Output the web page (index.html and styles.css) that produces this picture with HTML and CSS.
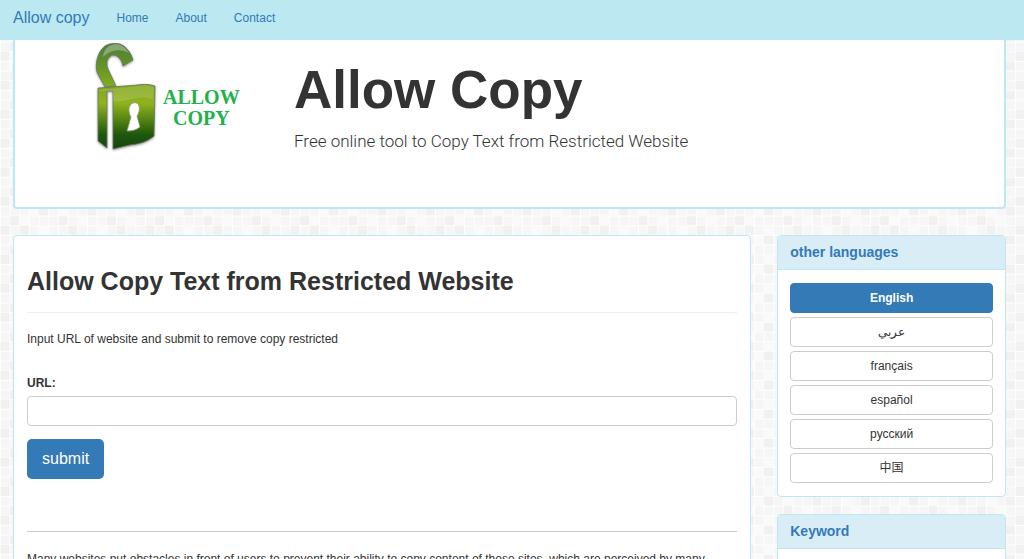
FILE: index.html
```html
<!DOCTYPE html>
<html lang="en">
<head>
  <meta charset="UTF-8">
  <meta name="viewport" content="width=device-width, initial-scale=1">
  <title>Allow Copy</title>
  <link rel="stylesheet" href="styles.css">
</head>
<body>
  <nav class="navbar">
    <a class="brand" href="#">Allow copy</a>
    <a href="#">Home</a>
    <a href="#">About</a>
    <a href="#">Contact</a>
  </nav>

  <div class="container">
    <header class="banner">
      <div class="logo">
        <svg class="lock" viewBox="0 0 64 112" aria-hidden="true">
          <defs>
            <linearGradient id="body" gradientUnits="userSpaceOnUse" x1="0" y1="42" x2="0" y2="106">
              <stop offset="0" stop-color="#7fa51c" />
              <stop offset="0.28" stop-color="#91b31d" />
              <stop offset="0.5" stop-color="#5d8c16" />
              <stop offset="0.78" stop-color="#1f5608" />
              <stop offset="1" stop-color="#174706" />
            </linearGradient>
            <linearGradient id="shackle" x1="0" y1="0" x2="0" y2="1">
              <stop offset="0" stop-color="#527e38" />
              <stop offset="0.45" stop-color="#5d912a" />
              <stop offset="1" stop-color="#83ad1d" />
            </linearGradient>
            <filter id="shadow" x="-20%" y="-20%" width="140%" height="140%">
              <feDropShadow dx="0" dy="1" stdDeviation="1" flood-color="#333" flood-opacity="0.5" />
            </filter>
          </defs>
          <g filter="url(#shadow)" stroke="#68746a" stroke-width="0.8" stroke-linejoin="round">
            <path fill="url(#body)" d="M3 45 L42 42 C48 41 54 41 60 43 L59 93 C52 99 44 101 35 102 L18 106 L18 48 L12 48 L12 105 L3 98 Z" />
            <path fill="url(#shackle)" d="M10 44 C7 38 4 34 2 29 C0 22 2 9 10 3 C15 0 26 -2 32 6 C35 9 37 13 38 17 L28 23 C27 19 26 16 23 14 C20 11 15 11 12 18 C12 21 12 24 13 26 L21 43 Z" />
            <path fill="#fff" stroke="#8c9d80" d="M38 60 C45 58 46 67 42 73 L45 84 C41 87 37 88 32 88 L36 74 C33 69 33 62 38 60 Z" />
          </g>
          <path fill="#fff" opacity="0.3" d="M8 14 C9 4 16 1 22 1 C28 2 31 5 34 10 C25 5 15 7 8 14 Z" />
          <path fill="#fff" opacity="0.14" d="M4 47 L42 43 C49 42 54 42 59 44 L58 57 C47 50 31 60 18 58 L18 48 L4 48 Z" />
        </svg>
        <span class="logo-text">ALLOW<br>COPY</span>
      </div>
      <div class="banner-text">
        <h1>Allow Copy</h1>
        <p>Free online tool to Copy Text from Restricted Website</p>
      </div>
    </header>

    <div class="row">
      <main class="col-main">
        <div class="panel content">
          <h2>Allow Copy Text from Restricted Website</h2>
          <p>Input URL of website and submit to remove copy restricted</p>
          <form action="#">
            <label for="url">URL:</label>
            <input type="text" id="url" name="url">
            <button type="submit" class="btn-submit">submit</button>
          </form>
          <p class="article">Many websites put obstacles in front of users to prevent their ability to copy content of these sites, which are perceived by many</p>
        </div>
      </main>

      <aside class="col-side">
        <section class="panel">
          <h3>other languages</h3>
          <div class="languages">
            <a class="active" href="#">English</a>
            <a href="#" lang="ar">عربي</a>
            <a href="#" lang="fr">français</a>
            <a href="#" lang="es">español</a>
            <a href="#" lang="ru">русский</a>
            <a href="#" lang="zh">中国</a>
          </div>
        </section>
        <section class="panel">
          <h3>Keyword</h3>
          <div class="keywords"></div>
        </section>
      </aside>
    </div>
  </div>
</body>
</html>
```
FILE: styles.css
```css
* {
  box-sizing: border-box;
}

body {
  margin: 0;
  padding-top: 40px;
  background-color: #f9f9f9;
  /* small squares, 15 columns by 3 rows */
  background-image: url("data:image/svg+xml,%3Csvg xmlns='http://www.w3.org/2000/svg' width='150' height='30' viewBox='0 0 150 30'%3E%3Cdefs%3E%3Cpattern id='p' width='10' height='10' patternUnits='userSpaceOnUse'%3E%3Crect x='1' y='1' width='9' height='9' fill='%23f6f6f6'/%3E%3C/pattern%3E%3C/defs%3E%3Crect width='150' height='30' fill='%23fefefe'/%3E%3Crect width='150' height='30' fill='url(%23p)'/%3E%3Cpath fill='%23fafafa' d='M31 1h9v9h-9zM61 1h9v9h-9zM121 1h9v9h-9zM21 11h9v9h-9zM81 11h9v9h-9zM131 11h9v9h-9zM41 21h9v9h-9zM101 21h9v9h-9z'/%3E%3Cpath fill='%23f1f1f0' stroke='%23ededec' stroke-width='.6' d='M41 1h8v8h-8zM91 1h8v8h-8zM141 1h8v8h-8zM11 11h8v8h-8zM61 11h8v8h-8zM111 11h8v8h-8zM1 21h8v8h-8zM21 21h8v8h-8zM71 21h8v8h-8zM121 21h8v8h-8z'/%3E%3C/svg%3E");
  background-size: 145px 29px;
  background-position: 0 3px;
  font-family: "Liberation Sans", "Noto Sans CJK SC", sans-serif;
  font-size: 12px;
  line-height: 18px;
  color: #333;
}

a {
  color: #337ab7;
  text-decoration: none;
}

.navbar {
  position: fixed;
  top: 0;
  left: 0;
  right: 0;
  z-index: 10;
  display: flex;
  align-items: center;
  gap: 27px;
  height: 40px;
  padding: 0 13px 4px;
  background: #bce8f1;
}

.brand {
  font-size: 16px;
}

.container {
  margin-right: 5px;
}

.banner {
  display: flex;
  margin: 0 13px 26px;
  padding-bottom: 52px;
  background: #fff;
  border: 2px solid #bce8f1;
  border-top: 0;
  border-radius: 0 0 4px 4px;
}

.logo {
  display: flex;
  flex: 0 0 279px;
  gap: 4px;
  padding: 3px 0 0 80px;
}

.lock {
  width: 64px;
  height: 112px;
  overflow: visible;
}

.logo-text {
  padding-top: 44px;
  font-family: "Liberation Serif", serif;
  font-size: 20px;
  font-weight: bold;
  line-height: 21px;
  color: #22b14c;
  text-align: center;
}

.banner-text h1 {
  margin: 20px 0 10px;
  font-size: 53px;
  line-height: 60px;
}

.banner-text p {
  margin: 0;
  font-family: Roboto, "Liberation Sans", sans-serif;
  font-size: 17px;
  font-weight: 300;
  line-height: 22px;
}

.row {
  display: flex;
}

.col-main {
  flex: 0 0 75%;
  padding: 0 13px;
}

.col-side {
  flex: 0 0 25%;
  padding: 0 13px;
}

.panel {
  margin-bottom: 17px;
  background: #fff;
  border: 1px solid #bce8f1;
  border-radius: 4px;
  overflow: hidden;
}

.content {
  padding: 0 13px 20px;
}

.content h2 {
  margin: 26px 0 17px;
  padding-bottom: 12px;
  border-bottom: 1px solid #eee;
  font-size: 25px;
  line-height: 38px;
}

.content p {
  margin: 0 0 26px;
}

label {
  display: block;
  margin-bottom: 4px;
  font-weight: bold;
}

input {
  display: block;
  width: 100%;
  height: 30px;
  margin-bottom: 13px;
  padding: 5px 10px;
  border: 1px solid #ccc;
  border-radius: 4px;
  font: inherit;
}

.btn-submit {
  height: 40px;
  padding: 0 15px;
  background: #337ab7;
  border: 0;
  border-radius: 5px;
  font-family: inherit;
  font-size: 16px;
  color: #fff;
  cursor: pointer;
}

.content .article {
  margin: 52px 0 0;
  padding-top: 18px;
  border-top: 1px solid #ccc;
}

.panel h3 {
  margin: 0;
  padding: 8px 12px;
  background: #d9edf7;
  border-bottom: 1px solid #bce8f1;
  font-size: 14px;
  line-height: 17px;
  color: #337ab7;
}

.languages {
  display: flex;
  flex-direction: column;
  gap: 4px;
  padding: 13px 12px;
}

.languages a {
  height: 30px;
  border: 1px solid #ccc;
  border-radius: 4px;
  line-height: 28px;
  color: #333;
  text-align: center;
}

.languages .active {
  background: #337ab7;
  border-color: #337ab7;
  font-weight: bold;
  color: #fff;
}

.keywords {
  height: 40px;
}
```
